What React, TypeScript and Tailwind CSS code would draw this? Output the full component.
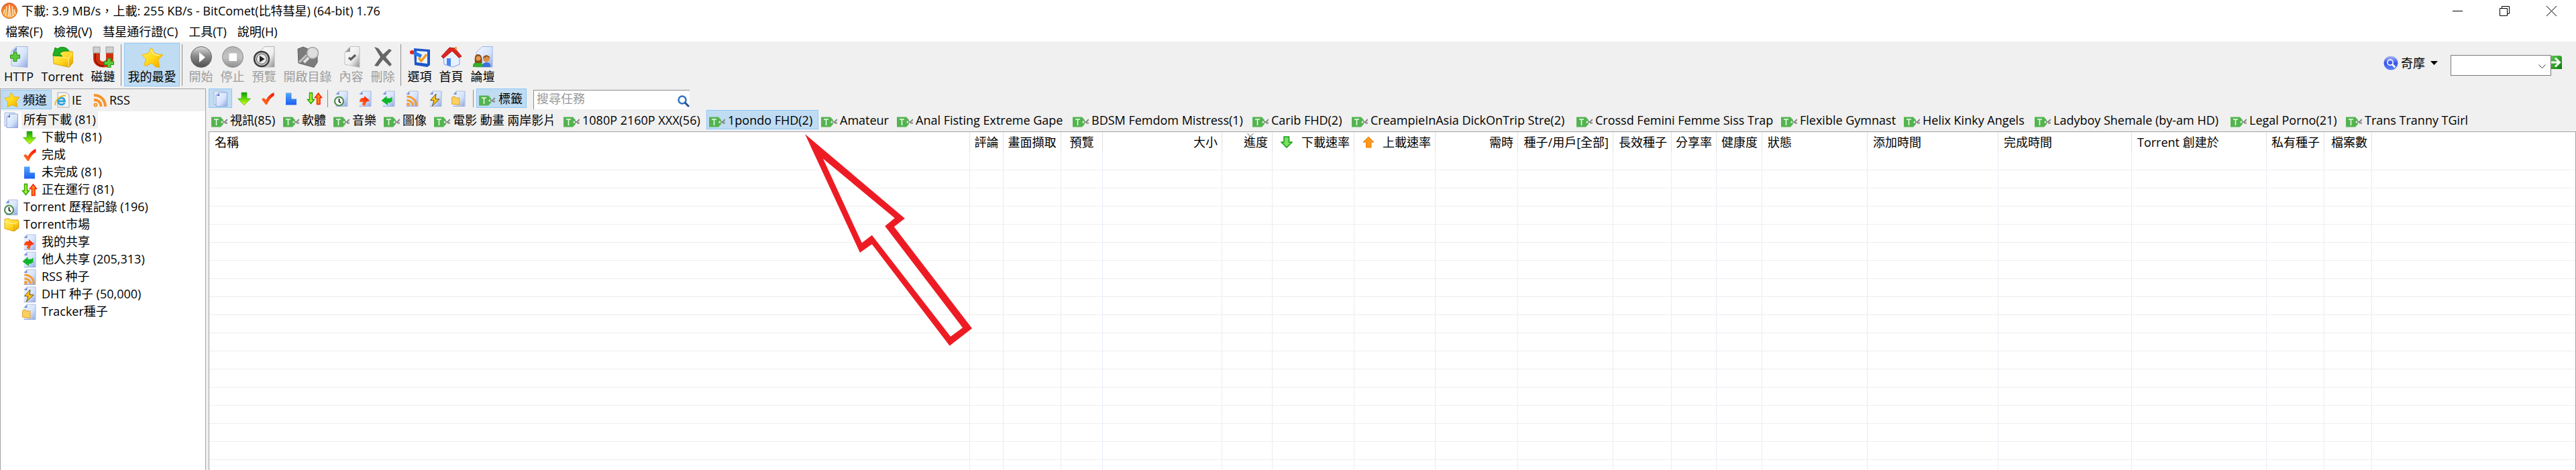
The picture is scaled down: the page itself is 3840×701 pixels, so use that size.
import React from "react";

type P = { className?: string };

function Defs() {
  return (
    <svg width="0" height="0" className="absolute" aria-hidden="true">
      <defs>
        <linearGradient id="gPage" x1="0" y1="0" x2="1" y2="1">
          <stop offset="0" stopColor="#f4f8fe" />
          <stop offset="0.6" stopColor="#d3e2fb" />
          <stop offset="1" stopColor="#8fa6dd" />
        </linearGradient>
        <linearGradient id="gGray" x1="0" y1="0" x2="1" y2="1">
          <stop offset="0" stopColor="#ffffff" />
          <stop offset="0.6" stopColor="#ececec" />
          <stop offset="1" stopColor="#8a8a8a" />
        </linearGradient>
        <linearGradient id="gBall" x1="0" y1="0" x2="0" y2="1">
          <stop offset="0" stopColor="#dcdcdc" />
          <stop offset="0.45" stopColor="#8a8a8a" />
          <stop offset="1" stopColor="#4e4e4e" />
        </linearGradient>
        <linearGradient id="gBall2" x1="0" y1="0" x2="0" y2="1">
          <stop offset="0" stopColor="#b4b4b4" />
          <stop offset="0.5" stopColor="#c4c4c4" />
          <stop offset="1" stopColor="#8f8f8f" />
        </linearGradient>
        <linearGradient id="gDown" x1="0" y1="0" x2="0" y2="1">
          <stop offset="0" stopColor="#0f9a0a" />
          <stop offset="0.5" stopColor="#62dc05" />
          <stop offset="1" stopColor="#e4fb1c" />
        </linearGradient>
        <linearGradient id="gHot" x1="1" y1="0" x2="0" y2="1">
          <stop offset="0" stopColor="#fb0d05" />
          <stop offset="1" stopColor="#ff7a1e" />
        </linearGradient>
        <linearGradient id="gStar" x1="0" y1="0" x2="1" y2="1">
          <stop offset="0" stopColor="#fff36a" />
          <stop offset="0.5" stopColor="#ffd91a" />
          <stop offset="1" stopColor="#f0a400" />
        </linearGradient>
        <linearGradient id="gFolder" x1="0" y1="0" x2="1" y2="1">
          <stop offset="0" stopColor="#fff36a" />
          <stop offset="0.6" stopColor="#ffd21a" />
          <stop offset="1" stopColor="#d59300" />
        </linearGradient>
        <linearGradient id="gBlue" x1="0" y1="0" x2="0" y2="1">
          <stop offset="0" stopColor="#55a8fb" />
          <stop offset="1" stopColor="#1b5ff0" />
        </linearGradient>
        <linearGradient id="gOrb" x1="0" y1="0" x2="0" y2="1">
          <stop offset="0" stopColor="#a8baf3" />
          <stop offset="0.5" stopColor="#3a55e8" />
          <stop offset="1" stopColor="#5b86ff" />
        </linearGradient>
        <linearGradient id="gLogo" x1="0" y1="0" x2="0" y2="1">
          <stop offset="0" stopColor="#f0682c" />
          <stop offset="0.5" stopColor="#fb8a22" />
          <stop offset="1" stopColor="#ffb64a" />
        </linearGradient>
        <linearGradient id="gGo" x1="0" y1="0" x2="1" y2="1">
          <stop offset="0" stopColor="#5cc94e" />
          <stop offset="1" stopColor="#057a05" />
        </linearGradient>
      </defs>
    </svg>
  );
}

function Svg({ className = "size-6", box = "0 0 24 24", children }: P & { box?: string; children: React.ReactNode }) {
  return (
    <svg viewBox={box} className={"block shrink-0 " + className} fill="none" aria-hidden="true">
      {children}
    </svg>
  );
}

const PageShape = () => (
  <g>
    <path d="M8 1H20.500V23.500H3.500V5.500Z" fill="url(#gPage)" />
    <path d="M3.500 5.500L8 1H21" stroke="#b4c0dc" />
    <path d="M21 1V23.500H3.500" stroke="#9aaee6" />
    <path d="M4 6L8.500 1.500V6Z" fill="#7289d8" />
  </g>
);

const Pages = ({ className }: P) => (
  <Svg className={className}>
    <path d="M2 1H17V21H2Z" fill="#dfe8fa" stroke="#a9bbdf" />
    <path d="M9 3H21.500V23.500H5V7Z" fill="url(#gPage)" stroke="#8fa5e0" />
    <path d="M6 8L10 4V8Z" fill="#4d66cf" />
  </Svg>
);
const DownArrow = ({ className }: P) => (
  <Svg className={className}>
    <path d="M8 3H16V12H21.500L12 22L2.500 12H8Z" fill="url(#gDown)" stroke="#2fa50c" strokeOpacity="0.6" />
  </Svg>
);
const Check = ({ className }: P) => (
  <Svg className={className}>
    <path d="M3 13L6 11L9.500 14C12 9 16 5 21.500 3V8C17 10 13.500 15 11 21H9Z" fill="url(#gHot)" />
  </Svg>
);
const Block = ({ className }: P) => (
  <Svg className={className}>
    <path d="M4 3.500H12.500V12.500H20V21.500H4Z" fill="url(#gBlue)" />
  </Svg>
);
const UpDown = ({ className }: P) => (
  <Svg className={className}>
    <path d="M4.500 3.500H8.500V13.500H11.500L6.500 19.500L1.500 13.500H4.500Z" fill="#a5f52a" stroke="#2fa50c" strokeWidth="1.500" />
    <path d="M15.500 20.500V10.500H12.500L17.500 4L22.500 10.500H20V20.500Z" fill="#ff8a12" stroke="#f5210a" strokeWidth="1.500" />
  </Svg>
);
const PageClock = ({ className }: P) => (
  <Svg className={className}>
    <PageShape />
    <circle cx="8.500" cy="16" r="6.500" fill="#fff" stroke="#4c8f4c" strokeWidth="2.200" />
    <path d="M8.500 12V16.500L11 18.500" stroke="#222" strokeWidth="1.800" />
  </Svg>
);
const PageShare = ({ className }: P) => (
  <Svg className={className}>
    <PageShape />
    <path d="M11 8L19 15L14 17L12 23L7.500 21L9.500 17H4C4 12 7 10.500 11 11Z" fill="url(#gHot)" />
  </Svg>
);
const PageGet = ({ className }: P) => (
  <Svg className={className}>
    <PageShape />
    <path d="M9.500 8V11.500H15L17.500 9V16L14 18.500H11V22L1.500 15Z" fill="#0fb62c" />
  </Svg>
);
const Arcs = () => (
  <g stroke="#f79a2c" strokeWidth="3">
    <path d="M4.500 9C12 9 18.500 14 18.500 22.500" />
    <path d="M4.500 14.500C9.500 14.500 13 17.500 13 22.500" />
    <circle cx="6.500" cy="20.500" r="1" />
  </g>
);
const PageRss = ({ className }: P) => (
  <Svg className={className}>
    <PageShape />
    <Arcs />
  </Svg>
);
const Rss = ({ className }: P) => (
  <Svg className={className}>
    <g stroke="#f8942a" strokeWidth="4">
      <path d="M3 5C13 5 20 12 20 22" />
      <path d="M3 12C9.500 12 13.500 16 13.500 22" />
      <circle cx="5.500" cy="19.500" r="1" />
    </g>
  </Svg>
);
const PageBolt = ({ className }: P) => (
  <Svg className={className}>
    <PageShape />
    <path d="M13 5L4.500 14.500L10 15L7.500 23L18 13L12 12.500Z" fill="#fbc51c" stroke="#6e4b0c" />
  </Svg>
);
const PageFolder = ({ className }: P) => (
  <Svg className={className}>
    <PageShape />
    <path d="M1.500 11L3 9H6L7 11H13V21.500L1.500 20Z" fill="#fbd05e" stroke="#e2a32e" />
  </Svg>
);
const Folder = ({ className }: P) => (
  <Svg className={className}>
    <path d="M2 4L8 3L11 5H22L23 8V17L16 22L2 18Z" fill="url(#gFolder)" stroke="#dda512" />
    <path d="M2 8L16 11L22 8" stroke="#fff8a0" />
    <path d="M16 11V21" stroke="#e3a90d" />
  </Svg>
);
const Star = ({ className }: P) => (
  <Svg className={className}>
    <path d="M10.500 1L14.500 7.500L23 8L18 14L20 22.500L12 19.500L5 22.500L6 15L1 9.500L8.500 8Z" fill="url(#gStar)" stroke="#eeb000" />
  </Svg>
);
const Ie = ({ className }: P) => (
  <Svg className={className}>
    <path d="M5 1H18L22 5V23H5Z" fill="#f5f5f5" stroke="#a8a8a8" />
    <path d="M5.500 14H15.500C15 10 12.500 9 10.500 9C7.500 9 5.500 11 5.500 14C5.500 17 8 19 10.500 19C13 19 14.500 18 15.500 16.500" stroke="#2aa3de" strokeWidth="2.800" />
    <path d="M1.500 20C0 14 8 5 17 5.500" stroke="#f3b81d" strokeWidth="1.800" />
  </Svg>
);
const Tag = () => (
  <Svg className="mt-1.5 h-4 w-6" box="0 0 24 16">
    <path d="M0 0.500H14L18 5V11L14 15.500H0Z" fill="#53b44f" />
    <path d="M4 4H11M7.500 4V13" stroke="#f1fbef" strokeWidth="1.500" />
    <circle cx="16" cy="8" r="1.500" fill="#eee" />
    <path d="M17 8H20L24 4M20 9.500H24" stroke="#858585" strokeWidth="2" />
  </Svg>
);

const Box32 = ({ children }: { children: React.ReactNode }) => (
  <Svg className="size-8" box="0 0 32 32">
    {children}
  </Svg>
);
const Plus = ({ x, y }: { x: number; y: number }) => (
  <path
    transform={`translate(${x} ${y})`}
    d="M5 0.500H10V5H14.500V10H10V14.500H5V10H0.500V5H5Z"
    fill="#5fca3c"
    stroke="#1f8f12"
  />
);
const HttpIcon = () => (
  <Box32>
    <path d="M12 0.500H29V31.500L5 29V7Z" fill="url(#gPage)" stroke="#a7b7e0" />
    <path d="M6 8L13 1V7Z" fill="#7b92dd" />
    <Plus x={3} y={8} />
  </Box32>
);
const TorrentIcon = () => (
  <Box32>
    <path d="M2 10L10 6L31 8L32 11V24L26 31.500L3 26Z" fill="url(#gFolder)" stroke="#d9a513" />
    <path d="M3 14L25 18L31 10M25 18V31" stroke="#fff39a" />
    <path d="M26 7C22 0 12 0 9 4L5 2L2 14L16 15L12 11C15 7 20 7 26 7Z" fill="#1faf22" stroke="#0f8c14" />
  </Box32>
);
const MagnetIcon = () => (
  <Box32>
    <path d="M1 1H11V19C11 24 20 24 20 19V1H31V18C31 36 1 36 1 18Z" fill="#d3300f" />
    <path d="M1 1H11V10H1ZM20 1H31V10H20Z" fill="#cfcfcf" stroke="#9b9b9b" />
    <path d="M4 11V19C4 27 12 30 17 29" stroke="#8c1803" strokeWidth="2" />
    <Plus x={17} y={17.5} />
  </Box32>
);
const FavIcon = () => (
  <Box32>
    <path d="M14.500 2L20 11L32 13L25 20L27 31.500L21 31L15 25L7 29.500L4 28L6.500 19L0.500 13L10 10.500Z" fill="url(#gStar)" stroke="#efb512" />
    <path d="M14.500 5L18 12L27 14" stroke="#fffbd0" />
  </Box32>
);
const StartIcon = () => (
  <Box32>
    <circle cx="16" cy="16" r="15.500" fill="url(#gBall)" stroke="#6b6b6b" />
    <path d="M13 9L22 16.500L13 24Z" fill="#fff" />
  </Box32>
);
const StopIcon = () => (
  <Box32>
    <circle cx="16" cy="16" r="15.500" fill="url(#gBall2)" stroke="#8d8d8d" />
    <path d="M10.500 10.500H22V22H10.500Z" fill="#fff" />
  </Box32>
);
const PreviewIcon = () => (
  <Box32>
    <path d="M17 0.500H31V31H10V7Z" fill="url(#gGray)" stroke="#b2b2b2" />
    <circle cx="12" cy="19" r="11" fill="#c9c9c9" stroke="#3f3f3f" strokeWidth="2.500" />
    <circle cx="12" cy="19" r="7.500" fill="#e9e9e9" stroke="#555" />
    <path d="M9 14L16.500 19L9 24Z" fill="#222" />
  </Box32>
);
const OpenDirIcon = () => (
  <Box32>
    <path d="M1 4L9 1L16 4L30 14V24L25 31.500L2 25Z" fill="#7c7c7c" stroke="#5e5e5e" />
    <path d="M3 24L14 13" stroke="#c4c4c4" strokeWidth="3" />
    <circle cx="23" cy="10" r="8.500" fill="#dedede" stroke="#a0a0a0" strokeWidth="1.500" />
    <path d="M17 17L10 24" stroke="#e2e2e2" strokeWidth="4" />
  </Box32>
);
const ContentIcon = () => (
  <Box32>
    <path d="M14 0.500H28V31.500L6 27V9Z" fill="url(#gGray)" stroke="#c0c0c0" />
    <path d="M7 9L14 1V8Z" fill="#989898" />
    <path d="M12 17L15 19.500L22 13" stroke="#5f5f5f" strokeWidth="3.500" />
  </Box32>
);
const DeleteIcon = () => (
  <Box32>
    <path d="M3 1L9 3L16 12L25 4L29 6L20 16L29 27L26 30L16 20L8 30L3 29L12 16Z" fill="#666" />
  </Box32>
);
const OptionsIcon = () => (
  <Box32>
    <path d="M7 3L31 5V28L27 31L8 28Z" fill="#1e56c8" />
    <path d="M11 7L27 8V26L11 24Z" fill="#eef4ff" />
    <path d="M4 8L18 15" stroke="#2277ee" strokeWidth="5" />
    <circle cx="4" cy="9" r="3" fill="#e8261c" />
    <path d="M14 17L18 22L26 12" stroke="#f59a1b" strokeWidth="3.500" />
  </Box32>
);
const HomeIcon = () => (
  <Box32>
    <path d="M4 15L14 5L28 15V27L18 31L5 27Z" fill="#e8f1ff" stroke="#7fa3e6" />
    <path d="M9 18H15V30L9 28Z" fill="#4b86ea" />
    <path d="M1 15L13 2L21 3L31 15L27 17L17 7L4 18Z" fill="#dd2620" stroke="#b81512" />
    <path d="M21 1H24V6L21 4Z" fill="#f2a73c" />
  </Box32>
);
const ForumIcon = () => (
  <Box32>
    <path d="M15 0.500H30V31H6V9Z" fill="url(#gPage)" stroke="#9fb3e6" />
    <path d="M1 31C0 25 4 24 9 24C14 24 17 26 16.500 31Z" fill="#36b02c" />
    <path d="M4 25C3 16 4 12 9 12C14 12 15 18 14.500 25Z" fill="#8a4c14" />
    <circle cx="9" cy="18" r="3.500" fill="#e59a52" />
    <path d="M15 31C15 25 18 24 21.500 24C26 24 28 27 27 31Z" fill="#3c74dc" />
    <circle cx="21" cy="18.500" r="5" fill="#d98f49" />
    <path d="M16 18C16 12 26 12 26.500 18L22 15Z" fill="#8a4c14" />
  </Box32>
);

type Tool = { label: string; icon: React.ReactNode; w: string; on?: boolean; off?: boolean } | null;
const tools: Tool[] = [
  { label: "HTTP", icon: <HttpIcon />, w: "w-14" },
  { label: "Torrent", icon: <TorrentIcon />, w: "w-[74px]" },
  { label: "磁鏈", icon: <MagnetIcon />, w: "w-[47px]" },
  null,
  { label: "我的最愛", icon: <FavIcon />, w: "w-[83px]", on: true },
  null,
  { label: "開始", icon: <StartIcon />, w: "w-[47px]", off: true },
  { label: "停止", icon: <StopIcon />, w: "w-[47px]", off: true },
  { label: "預覽", icon: <PreviewIcon />, w: "w-[47px]", off: true },
  { label: "開啟目錄", icon: <OpenDirIcon />, w: "w-[83px]", off: true },
  { label: "內容", icon: <ContentIcon />, w: "w-[47px]", off: true },
  { label: "刪除", icon: <DeleteIcon />, w: "w-[47px]", off: true },
  null,
  { label: "選項", icon: <OptionsIcon />, w: "w-[47px]" },
  { label: "首頁", icon: <HomeIcon />, w: "w-[47px]" },
  { label: "論壇", icon: <ForumIcon />, w: "w-[47px]" },
];

const tree = [
  { label: "所有下載 (81)", Icon: Pages, root: true, on: true },
  { label: "下載中 (81)", Icon: DownArrow },
  { label: "完成", Icon: Check },
  { label: "未完成 (81)", Icon: Block },
  { label: "正在運行 (81)", Icon: UpDown },
  { label: "Torrent 歷程記錄 (196)", Icon: PageClock, root: true },
  { label: "Torrent市場", Icon: Folder, root: true },
  { label: "我的共享", Icon: PageShare },
  { label: "他人共享 (205,313)", Icon: PageGet },
  { label: "RSS 种子", Icon: PageRss },
  { label: "DHT 种子 (50,000)", Icon: PageBolt },
  { label: "Tracker種子", Icon: PageFolder },
];

const filters = [
  { name: "所有下載", Icon: Pages, on: true },
  { name: "下載中", Icon: DownArrow },
  { name: "完成", Icon: Check },
  { name: "未完成", Icon: Block },
  { name: "正在運行", Icon: UpDown },
];
const sources = [
  { name: "歷程記錄", Icon: PageClock },
  { name: "我的共享", Icon: PageShare },
  { name: "他人共享", Icon: PageGet },
  { name: "RSS 种子", Icon: PageRss },
  { name: "DHT 种子", Icon: PageBolt },
  { name: "Tracker種子", Icon: PageFolder },
];

const tags = [
  { label: "視訊(85)", w: "w-[107px]" },
  { label: "軟體", w: "w-[75px]" },
  { label: "音樂", w: "w-[75px]" },
  { label: "圖像", w: "w-[75px]" },
  { label: "電影 動畫 兩岸影片", w: "w-[193px]" },
  { label: "1080P 2160P XXX(56)", w: "w-[217px]" },
  { label: "1pondo FHD(2)", w: "w-[167px]", on: true },
  { label: "Amateur", w: "w-[113px]" },
  { label: "Anal Fisting Extreme Gape", w: "w-[262px]" },
  { label: "BDSM Femdom Mistress(1)", w: "w-[268px]" },
  { label: "Carib FHD(2)", w: "w-[148px]" },
  { label: "CreampieInAsia DickOnTrip Stre(2)", w: "w-[335px]" },
  { label: "Crossd Femini Femme Siss Trap", w: "w-[305px]" },
  { label: "Flexible Gymnast", w: "w-[183px]" },
  { label: "Helix Kinky Angels", w: "w-[195px]" },
  { label: "Ladyboy Shemale (by-am HD)", w: "w-[292px]" },
  { label: "Legal Porno(21)", w: "w-[172px]" },
  { label: "Trans Tranny TGirl", w: "w-[192px]" },
];

type Col = { label: string; w: string; a?: "r" | "c"; mark?: "down" | "up" | "sort" };
const cols: Col[] = [
  { label: "名稱", w: "w-[1134px]" },
  { label: "評論", w: "w-[50px]", a: "c" },
  { label: "畫面擷取", w: "w-[86px]", a: "c" },
  { label: "預覽", w: "w-[62px]", a: "c" },
  { label: "大小", w: "w-[178px]", a: "r" },
  { label: "進度", w: "w-[75px]", a: "r", mark: "sort" },
  { label: "下載速率", w: "w-[122px]", a: "r", mark: "down" },
  { label: "上載速率", w: "w-[121px]", a: "r", mark: "up" },
  { label: "需時", w: "w-[123px]", a: "r" },
  { label: "種子/用戶[全部]", w: "w-[142px]", a: "r" },
  { label: "長效種子", w: "w-[87px]", a: "r" },
  { label: "分享率", w: "w-[67px]", a: "r" },
  { label: "健康度", w: "w-[68px]", a: "r" },
  { label: "狀態", w: "w-[157px]" },
  { label: "添加時間", w: "w-[195px]" },
  { label: "完成時間", w: "w-[199px]" },
  { label: "Torrent 創建於", w: "w-[201px]" },
  { label: "私有種子", w: "w-[86px]", a: "r" },
  { label: "檔案數", w: "w-[71px]", a: "r" },
];
const rows = Array.from({ length: 18 }, (_, i) => i);

const SmallArrow = ({ up }: { up?: boolean }) => (
  <svg viewBox="0 0 18 18" className="block size-[18px]" aria-hidden="true">
    {up ? (
      <path d="M9 1L17 9H13V17H5.500V9H1Z" fill="#ff9a1a" stroke="#ea7a08" />
    ) : (
      <path d="M9 17L1 9H5V1H12.500V9H17Z" fill="#7be05c" stroke="#129a1c" strokeWidth="1.500" />
    )}
  </svg>
);

const Divider = ({ className = "" }: P) => <span className={"w-px shrink-0 bg-[#8d8d8d] " + className} />;

export default function App() {
  return (
    <div
      lang="zh-TW"
      className="relative flex h-screen flex-col overflow-hidden whitespace-nowrap bg-[#f0f0f0] font-['Open_Sans','Noto_Sans_CJK_TC',sans-serif] text-lg leading-6 text-black"
    >
      <Defs />

      <header className="bg-white">
        <div className="flex h-8 items-center pl-0.5">
          <Svg className="size-6">
            <circle cx="12" cy="12" r="11.500" fill="url(#gLogo)" stroke="#c75a28" />
            <path
              d="M12 2.500L10.500 21M12 2.500L13.500 21M8 5L6.500 20M16 5L17.500 20M5 10L3.500 17M19 10L20.500 17"
              stroke="#fff3dc"
              strokeWidth="1.300"
            />
          </Svg>
          <h1 className="ml-1.5">下載: 3.9 MB/s，上載: 255 KB/s - BitComet(比特彗星) (64-bit) 1.76</h1>
          <div className="ml-auto flex gap-[55px] pr-[29px]">
            <button aria-label="最小化">
              <svg viewBox="0 0 15 15" className="block size-[15px]" stroke="#000" fill="none">
                <path d="M0 7.500H15" />
              </svg>
            </button>
            <button aria-label="還原">
              <svg viewBox="0 0 15 15" className="block size-[15px]" stroke="#000" fill="none">
                <path d="M0.500 3.500H11.500V14.500H0.500ZM3.500 3.500V0.500H14.500V11.500H11.500" />
              </svg>
            </button>
            <button aria-label="關閉">
              <svg viewBox="0 0 15 15" className="block size-[15px]" stroke="#000" fill="none">
                <path d="M0 0L15 15M15 0L0 15" />
              </svg>
            </button>
          </div>
        </div>
        <nav className="flex h-[30px] items-center gap-4 px-2">
          {["檔案(F)", "檢視(V)", "彗星通行證(C)", "工具(T)", "說明(H)"].map((m) => (
            <button key={m}>{m}</button>
          ))}
        </nav>
      </header>

      <div className="flex h-[70px] shrink-0 pt-0.5">
        {tools.map((t, i) =>
          t ? (
            <button
              key={i}
              disabled={t.off}
              className={
                "flex h-[65px] shrink-0 flex-col items-center border pt-1 " +
                t.w +
                (t.on ? " border-[#90c8f6] bg-[#bfdcf3]" : " border-transparent") +
                (t.off ? " text-[#9d9d9d]" : "")
              }
            >
              {t.icon}
              <span className="mt-px">{t.label}</span>
            </button>
          ) : (
            <Divider key={i} className="ml-[3px] mr-1 mt-0.5 h-[62px]" />
          )
        )}
        <div className="ml-auto flex items-start pr-[21px] pt-[18px]">
          <button className="mr-[19px] flex h-6 items-center">
            <Svg className="size-[22px]">
              <circle cx="12" cy="12" r="11.500" fill="url(#gOrb)" />
              <circle cx="11" cy="11" r="4.500" stroke="#e6ecff" strokeWidth="2" />
              <path d="M14.500 14.500L19 19" stroke="#fff" strokeWidth="3" />
            </Svg>
            <span className="ml-1">奇摩</span>
            <svg viewBox="0 0 11 6" className="ml-2 h-1.5 w-[11px]" aria-hidden="true">
              <path d="M0 0H11L5.500 6Z" />
            </svg>
          </button>
          <div className="relative">
            <select aria-label="搜尋" className="block h-[31px] w-[150px] appearance-none rounded-none border border-[#7a7a7a] bg-white" />
            <svg
              viewBox="0 0 11 6"
              className="pointer-events-none absolute right-2 top-3.5 h-1.5 w-[11px]"
              fill="none"
              stroke="#333"
              aria-hidden="true"
            >
              <path d="M0.500 0.500L5.500 5.500L10.500 0.500" />
            </svg>
          </div>
          <button aria-label="前往">
            <svg viewBox="0 0 16 22" className="block h-[22px] w-4" fill="none" aria-hidden="true">
              <path d="M0 1H14L16 3V21H0Z" fill="url(#gGo)" />
              <path d="M0 11H12M6 4.500L12.500 11L6 17.500" stroke="#fff" strokeWidth="3" />
            </svg>
          </button>
        </div>
      </div>

      <div className="flex min-h-0 flex-1">
        <aside className="w-[307px] shrink-0 border border-b-0 border-[#a2a2a8] bg-white">
          <div className="flex h-[33px] items-start gap-1 bg-[#f0f0f0] pl-px pt-px">
            <button className="flex h-[29px] w-[75px] items-center border border-[#90c8f6] bg-[#bfdcf3] pl-[3px]">
              <Star className="size-6" />
              <span className="ml-1">頻道</span>
            </button>
            <button className="flex h-[29px] w-[52px] items-center">
              <Ie className="size-6" />
              <span className="ml-0.5">IE</span>
            </button>
            <button className="flex h-[29px] items-center">
              <Rss className="size-6" />
              <span className="ml-0.5">RSS</span>
            </button>
          </div>
          <ul>
            {tree.map(({ label, Icon, root, on }) => (
              <li key={label} className={root ? "pl-1" : "pl-[31px]"}>
                <button className="flex h-[26px] items-center">
                  <Icon className="size-6" />
                  <span className={"ml-[3px] h-[26px] px-[3px] leading-6" + (on ? " bg-[#f0f0f0]" : "")}>{label}</span>
                </button>
              </li>
            ))}
          </ul>
        </aside>

        <main className="ml-1 flex min-w-0 flex-1 flex-col">
          <div className="flex h-8 shrink-0 items-start">
            {filters.map(({ name, Icon, on }) => (
              <button
                key={name}
                aria-label={name}
                className={
                  "flex h-[29px] w-[35px] items-center justify-center border " +
                  (on ? "border-[#90c8f6] bg-[#bfdcf3]" : "border-transparent")
                }
              >
                <Icon className="size-6" />
              </button>
            ))}
            <Divider className="mx-0.5 mt-0.5 h-[26px]" />
            {sources.map(({ name, Icon }) => (
              <button key={name} aria-label={name} className="flex h-[29px] w-[35px] items-center justify-center">
                <Icon className="size-6" />
              </button>
            ))}
            <Divider className="mx-1 mt-0.5 h-[26px]" />
            <button className="flex h-[29px] w-[75px] items-center border border-[#90c8f6] bg-[#bfdcf3] pl-[3px]">
              <Tag />
              <span className="ml-[5px]">標籤</span>
            </button>
            <label className="ml-2.5 mt-0.5 flex h-[29px] w-[233px] border-l border-t border-[#8d8d8d] bg-white">
              <input
                type="text"
                aria-label="搜尋任務"
                placeholder="搜尋任務"
                className="h-6 w-full min-w-0 flex-1 pl-1 outline-none placeholder:text-[#9a9a9a]"
              />
              <svg viewBox="0 0 18 18" className="mt-[7px] size-[18px] shrink-0" fill="none" aria-hidden="true">
                <circle cx="7" cy="7" r="5.500" stroke="#2f74bd" strokeWidth="2.500" />
                <path d="M11 11L17 17" stroke="#27508f" strokeWidth="3" />
              </svg>
            </label>
          </div>

          <div className="flex h-8 shrink-0">
            {tags.map((t) => (
              <button
                key={t.label}
                className={
                  "flex h-[29px] shrink-0 items-center border pl-[3px] text-left " +
                  t.w +
                  (t.on ? " border-[#90c8f6] bg-[#bfdcf3]" : " border-transparent")
                }
              >
                <Tag />
                <span className="ml-1">{t.label}</span>
              </button>
            ))}
          </div>

          <div className="min-h-0 flex-1 overflow-hidden border border-b-0 border-[#a2a2a8] bg-white">
            <table className="w-full table-fixed border-separate border-spacing-0">
              <thead>
                <tr>
                  {cols.map((c) => (
                    <th
                      key={c.label}
                      className={
                        "relative h-[30px] border-r border-[#e2e2e2] p-0 font-normal " +
                        c.w +
                        (c.a === "r" ? " pr-1.5 text-right" : c.a === "c" ? " text-center" : " pl-2 text-left")
                      }
                    >
                      {c.mark === "sort" && (
                        <svg
                          viewBox="0 0 10 5"
                          className="absolute left-1/2 top-0.5 h-[5px] w-2.5"
                          stroke="#555"
                          fill="none"
                          aria-hidden="true"
                        >
                          <path d="M0.500 0L5 4.500L9.500 0" />
                        </svg>
                      )}
                      {c.mark === "down" || c.mark === "up" ? (
                        <span className="flex items-center justify-between pl-3">
                          <SmallArrow up={c.mark === "up"} />
                          {c.label}
                        </span>
                      ) : (
                        c.label
                      )}
                    </th>
                  ))}
                  <td />
                </tr>
              </thead>
              <tbody>
                {rows.map((r) => (
                  <tr key={r}>
                    {cols.map((c) => (
                      <td key={c.label} className="h-[27px] border-b border-r border-b-[#eeeeee] border-r-[#e6edf7] p-0" />
                    ))}
                    <td className="border-b border-[#eeeeee]" />
                  </tr>
                ))}
              </tbody>
            </table>
          </div>
        </main>
      </div>

      <svg
        viewBox="0 0 250 316"
        className="pointer-events-none absolute left-[1200px] top-[200px] h-[316px] w-[250px]"
        aria-hidden="true"
      >
        <path
          fill="#ed1c24"
          fillRule="evenodd"
          d="M0 0L148.800 125.700L132.800 138.300L249 289.700L215.600 315.700L99.800 164.300L81.900 176.700ZM27 36.700L84.800 162.300L99.800 150.700L217 302L235 288.700L119.200 137.300L133.700 125.300Z"
        />
      </svg>
    </div>
  );
}
